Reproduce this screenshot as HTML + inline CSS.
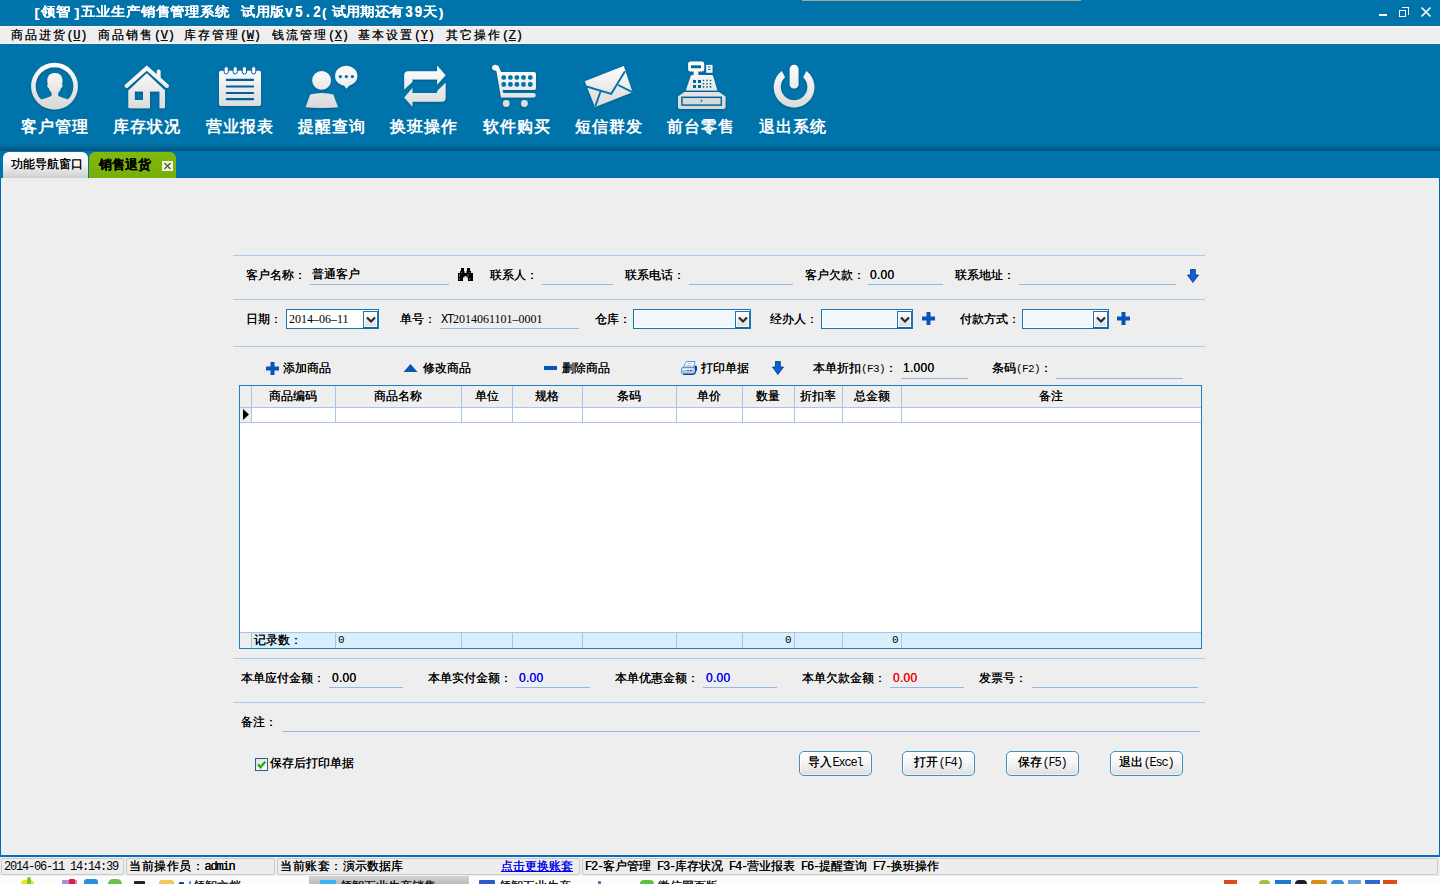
<!DOCTYPE html>
<html><head><meta charset="utf-8">
<style>
*{margin:0;padding:0;box-sizing:border-box}
html,body{width:1440px;height:884px;overflow:hidden;background:#eeeeee;font-family:"Liberation Sans",sans-serif;font-size:12px;color:#000;text-shadow:0 0 0.3px currentColor}
.a{position:absolute;white-space:nowrap}
.t{line-height:12px;height:12px}
.hl{position:absolute;height:1px;background:#a9c9ef}
.ul{position:absolute;height:1px;background:#91b8e8}
.lbl{position:absolute;color:#fff;text-shadow:none;font-size:16px;font-weight:bold;line-height:16px;top:118.5px;letter-spacing:1px;text-indent:1px;text-align:center;width:92px}
.combo{position:absolute;height:20px;border:1px solid #1873b0;background:#f2f9fe}
.combo i{position:absolute;right:1px;top:1px;width:15px;height:16px;background:linear-gradient(#f4f4f4,#dcdcdc);border:1px solid #8a8a8a}
.btn{position:absolute;height:25px;width:73px;border:1px solid #3c92c6;border-radius:5px;background:linear-gradient(#ffffff,#f6f6f6 45%,#dedede);text-align:center;line-height:20px;font-size:12px;box-shadow:inset 0 0 0 1px rgba(255,255,255,.6)}
.gl{position:absolute;background:#a9c4ec;width:1px}
.m{font-family:"Liberation Mono",monospace;font-size:11px;letter-spacing:-0.6px;text-shadow:none}
.m2{font-family:"Liberation Mono",monospace;font-size:12px;letter-spacing:-1.2px;text-shadow:none}
</style></head><body>

<div class="a" style="left:0;top:0;width:1440px;height:26px;background:#0074aa"></div>
<div class="a" style="left:802px;top:0;width:279px;height:1px;background:#a9a797"></div>
<div class="a" style="left:32.0px;width:10px;text-align:center;top:4px;color:#fff;font-weight:bold;font-size:13px;line-height:14px;font-family:Liberation Mono,monospace;transform:translateY(3px) scaleY(1.0);transform-origin:50% 100%">[</div>
<div class="a" style="left:40.5px;top:5px;color:#fff;font-weight:bold;font-size:14px;line-height:13px;height:13px;transform:scaleY(0.9);transform-origin:0 50%">领</div>
<div class="a" style="left:56.0px;top:5px;color:#fff;font-weight:bold;font-size:14px;line-height:13px;height:13px;transform:scaleY(0.9);transform-origin:0 50%">智</div>
<div class="a" style="left:72.0px;width:10px;text-align:center;top:4px;color:#fff;font-weight:bold;font-size:13px;line-height:14px;font-family:Liberation Mono,monospace;transform:translateY(3px) scaleY(1.0);transform-origin:50% 100%">]</div>
<div class="a" style="left:81.0px;top:5px;color:#fff;font-weight:bold;font-size:14px;line-height:13px;height:13px;transform:scaleY(0.9);transform-origin:0 50%">五</div>
<div class="a" style="left:95.9px;top:5px;color:#fff;font-weight:bold;font-size:14px;line-height:13px;height:13px;transform:scaleY(0.9);transform-origin:0 50%">业</div>
<div class="a" style="left:110.8px;top:5px;color:#fff;font-weight:bold;font-size:14px;line-height:13px;height:13px;transform:scaleY(0.9);transform-origin:0 50%">生</div>
<div class="a" style="left:125.7px;top:5px;color:#fff;font-weight:bold;font-size:14px;line-height:13px;height:13px;transform:scaleY(0.9);transform-origin:0 50%">产</div>
<div class="a" style="left:140.6px;top:5px;color:#fff;font-weight:bold;font-size:14px;line-height:13px;height:13px;transform:scaleY(0.9);transform-origin:0 50%">销</div>
<div class="a" style="left:155.5px;top:5px;color:#fff;font-weight:bold;font-size:14px;line-height:13px;height:13px;transform:scaleY(0.9);transform-origin:0 50%">售</div>
<div class="a" style="left:170.4px;top:5px;color:#fff;font-weight:bold;font-size:14px;line-height:13px;height:13px;transform:scaleY(0.9);transform-origin:0 50%">管</div>
<div class="a" style="left:185.3px;top:5px;color:#fff;font-weight:bold;font-size:14px;line-height:13px;height:13px;transform:scaleY(0.9);transform-origin:0 50%">理</div>
<div class="a" style="left:200.2px;top:5px;color:#fff;font-weight:bold;font-size:14px;line-height:13px;height:13px;transform:scaleY(0.9);transform-origin:0 50%">系</div>
<div class="a" style="left:215.1px;top:5px;color:#fff;font-weight:bold;font-size:14px;line-height:13px;height:13px;transform:scaleY(0.9);transform-origin:0 50%">统</div>
<div class="a" style="left:241.3px;top:5px;color:#fff;font-weight:bold;font-size:14px;line-height:13px;height:13px;transform:scaleY(0.9);transform-origin:0 50%">试</div>
<div class="a" style="left:255.5px;top:5px;color:#fff;font-weight:bold;font-size:14px;line-height:13px;height:13px;transform:scaleY(0.9);transform-origin:0 50%">用</div>
<div class="a" style="left:270.0px;top:5px;color:#fff;font-weight:bold;font-size:14px;line-height:13px;height:13px;transform:scaleY(0.9);transform-origin:0 50%">版</div>
<div class="a" style="left:284.0px;width:10px;text-align:center;top:4px;color:#fff;font-weight:bold;font-size:13px;line-height:14px;font-family:Liberation Mono,monospace;transform:translateY(4px) scaleY(1.3);transform-origin:50% 100%">v</div>
<div class="a" style="left:293.8px;width:10px;text-align:center;top:4px;color:#fff;font-weight:bold;font-size:13px;line-height:14px;font-family:Liberation Mono,monospace;transform:translateY(4px) scaleY(1.3);transform-origin:50% 100%">5</div>
<div class="a" style="left:302.8px;width:10px;text-align:center;top:4px;color:#fff;font-weight:bold;font-size:13px;line-height:14px;font-family:Liberation Mono,monospace;transform:translateY(4px) scaleY(1.3);transform-origin:50% 100%">.</div>
<div class="a" style="left:312.0px;width:10px;text-align:center;top:4px;color:#fff;font-weight:bold;font-size:13px;line-height:14px;font-family:Liberation Mono,monospace;transform:translateY(4px) scaleY(1.3);transform-origin:50% 100%">2</div>
<div class="a" style="left:319.4px;width:10px;text-align:center;top:4px;color:#fff;font-weight:bold;font-size:13px;line-height:14px;font-family:Liberation Mono,monospace;transform:translateY(3px) scaleY(1.0);transform-origin:50% 100%">(</div>
<div class="a" style="left:331.5px;top:5px;color:#fff;font-weight:bold;font-size:14px;line-height:13px;height:13px;transform:scaleY(0.9);transform-origin:0 50%">试</div>
<div class="a" style="left:345.8px;top:5px;color:#fff;font-weight:bold;font-size:14px;line-height:13px;height:13px;transform:scaleY(0.9);transform-origin:0 50%">用</div>
<div class="a" style="left:360.3px;top:5px;color:#fff;font-weight:bold;font-size:14px;line-height:13px;height:13px;transform:scaleY(0.9);transform-origin:0 50%">期</div>
<div class="a" style="left:374.5px;top:5px;color:#fff;font-weight:bold;font-size:14px;line-height:13px;height:13px;transform:scaleY(0.9);transform-origin:0 50%">还</div>
<div class="a" style="left:388.7px;top:5px;color:#fff;font-weight:bold;font-size:14px;line-height:13px;height:13px;transform:scaleY(0.9);transform-origin:0 50%">有</div>
<div class="a" style="left:404.0px;width:10px;text-align:center;top:4px;color:#fff;font-weight:bold;font-size:13px;line-height:14px;font-family:Liberation Mono,monospace;transform:translateY(4px) scaleY(1.3);transform-origin:50% 100%">3</div>
<div class="a" style="left:413.5px;width:10px;text-align:center;top:4px;color:#fff;font-weight:bold;font-size:13px;line-height:14px;font-family:Liberation Mono,monospace;transform:translateY(4px) scaleY(1.3);transform-origin:50% 100%">9</div>
<div class="a" style="left:423.4px;top:5px;color:#fff;font-weight:bold;font-size:14px;line-height:13px;height:13px;transform:scaleY(0.9);transform-origin:0 50%">天</div>
<div class="a" style="left:436.0px;width:10px;text-align:center;top:4px;color:#fff;font-weight:bold;font-size:13px;line-height:14px;font-family:Liberation Mono,monospace;transform:translateY(3px) scaleY(1.0);transform-origin:50% 100%">)</div>
<div class="a" style="left:1379px;top:14px;width:8px;height:2px;background:#fff"></div>
<div class="a" style="left:1402px;top:7px;width:7px;height:8px;border-top:1px solid #fff;border-right:1px solid #fff"></div>
<div class="a" style="left:1399px;top:10px;width:7px;height:7px;border:1px solid #fff"></div>
<svg class="a" style="left:1420px;top:6px" width="12" height="12"><path d="M1.5 1.5L10.5 10.5M10.5 1.5L1.5 10.5" stroke="#fff" stroke-width="1.6"/></svg>
<div class="a" style="left:0;top:26px;width:1440px;height:18px;background:#eeeeee"></div>
<div class="a" style="left:0;top:26px;width:1440px;height:1px;background:#fbf6f2"></div>
<div class="a" style="left:0;top:43px;width:1440px;height:1px;background:#fbf6f2"></div>
<div class="a t" style="left:10.5px;top:29px;color:#111"><span style="letter-spacing:2px">商品进货</span><span style="font-family:Liberation Mono,monospace;letter-spacing:-0.4px">(<u>U</u>)</span></div>
<div class="a t" style="left:98px;top:29px;color:#111"><span style="letter-spacing:2px">商品销售</span><span style="font-family:Liberation Mono,monospace;letter-spacing:-0.4px">(<u>V</u>)</span></div>
<div class="a t" style="left:184px;top:29px;color:#111"><span style="letter-spacing:2px">库存管理</span><span style="font-family:Liberation Mono,monospace;letter-spacing:-0.4px">(<u>W</u>)</span></div>
<div class="a t" style="left:272px;top:29px;color:#111"><span style="letter-spacing:2px">钱流管理</span><span style="font-family:Liberation Mono,monospace;letter-spacing:-0.4px">(<u>X</u>)</span></div>
<div class="a t" style="left:358px;top:29px;color:#111"><span style="letter-spacing:2px">基本设置</span><span style="font-family:Liberation Mono,monospace;letter-spacing:-0.4px">(<u>Y</u>)</span></div>
<div class="a t" style="left:446px;top:29px;color:#111"><span style="letter-spacing:2px">其它操作</span><span style="font-family:Liberation Mono,monospace;letter-spacing:-0.4px">(<u>Z</u>)</span></div>
<div class="a" style="left:0;top:44px;width:1440px;height:134px;background:#0074aa"></div>
<div class="a" style="left:0;top:144px;width:1440px;height:7px;background:linear-gradient(#0074aa,#03507a)"></div>
<div class="lbl" style="left:8.5px">客户管理</div>
<div class="lbl" style="left:100.8px">库存状况</div>
<div class="lbl" style="left:193.1px">营业报表</div>
<div class="lbl" style="left:285.4px">提醒查询</div>
<div class="lbl" style="left:377.7px">换班操作</div>
<div class="lbl" style="left:470.0px">软件购买</div>
<div class="lbl" style="left:562.3px">短信群发</div>
<div class="lbl" style="left:654.6px">前台零售</div>
<div class="lbl" style="left:746.9px">退出系统</div>
<svg class="a" style="left:28px;top:58px" width="54" height="56" viewBox="0 0 54 56"><defs><linearGradient id="g" gradientUnits="userSpaceOnUse" x1="0" y1="4" x2="0" y2="48"><stop offset="0" stop-color="#ffffff"/><stop offset="1" stop-color="#d9d9d9"/></linearGradient><filter id="sh" x="-20%" y="-20%" width="140%" height="140%"><feDropShadow dx="0" dy="1" stdDeviation="0.8" flood-color="#003a5a" flood-opacity="0.5"/></filter></defs><g fill="url(#g)" filter="url(#sh)"><path fill-rule="evenodd" d="M3.1 28.2a23.4 23.4 0 1 0 46.8 0a23.4 23.4 0 1 0 -46.8 0z M7.6 28.2a18.9 18.9 0 1 0 37.8 0a18.9 18.9 0 1 0 -37.8 0z"/><clipPath id="pc"><circle cx="26.5" cy="28.2" r="19.6"/></clipPath><g clip-path="url(#pc)"><path d="M26.5 14.9c-4.4 0-7.2 3-7.2 7.6 0 1.6.2 2.9.6 4.1-.8.2-.8 1.3-.4 2.2.3.7.7 1 1.1 1 .7 2.2 1.8 4 3 5v3.3c-3 1.3-8.5 3.1-12.8 4.3L10 52H43L43 42.4c-4.3-1.2-9.8-3-12.8-4.3v-3.3c1.2-1 2.3-2.8 3-5 .4 0 .8-.3 1.1-1 .4-.9.4-2-.4-2.2.4-1.2.6-2.5.6-4.1 0-4.6-2.8-7.6-7.2-7.6z"/></g></g></svg>
<svg class="a" style="left:120px;top:62px" width="54" height="50" viewBox="0 0 54 50"><defs><linearGradient id="g" gradientUnits="userSpaceOnUse" x1="0" y1="4" x2="0" y2="48"><stop offset="0" stop-color="#ffffff"/><stop offset="1" stop-color="#d9d9d9"/></linearGradient><filter id="sh" x="-20%" y="-20%" width="140%" height="140%"><feDropShadow dx="0" dy="1" stdDeviation="0.8" flood-color="#003a5a" flood-opacity="0.5"/></filter></defs><g fill="url(#g)" filter="url(#sh)"><path d="M6.6 24 L26.8 6 L47 24" stroke="url(#g)" stroke-width="3.9" stroke-linecap="round" fill="none"/><path d="M36.8 9.5 a1.9 1.9 0 0 1 3.8 0 V18 L36.8 14.6 Z"/><path fill-rule="evenodd" d="M8.3 28.6 L26.8 11.3 L45 28.6 V45 a1.2 1.2 0 0 1 -1.2 1.2 H9.5 a1.2 1.2 0 0 1 -1.2 -1.2 Z M14.8 29.6 H23 V38 H14.8 Z M30 29.6 H39.5 V46.3 H30 Z"/></g></svg>
<svg class="a" style="left:215px;top:62px" width="50" height="48" viewBox="0 0 50 48"><defs><linearGradient id="g4" gradientUnits="userSpaceOnUse" x1="0" y1="4" x2="0" y2="48"><stop offset="0" stop-color="#ffffff"/><stop offset="1" stop-color="#d9d9d9"/></linearGradient><filter id="sh4" x="-20%" y="-20%" width="140%" height="140%"><feDropShadow dx="0" dy="1" stdDeviation="0.8" flood-color="#003a5a" flood-opacity="0.5"/></filter></defs><g fill="url(#g4)" filter="url(#sh4)"><path fill-rule="evenodd" d="M4 10.7 a2 2 0 0 1 2-2 H44 a2 2 0 0 1 2 2 V42 a2 2 0 0 1-2 2 H6 a2 2 0 0 1-2-2 Z"/></g><rect x="10.7" y="16.8" width="28.5" height="2.2" rx="1.1" fill="#00619a"/><rect x="10.7" y="23.4" width="28.5" height="2.2" rx="1.1" fill="#00619a"/><rect x="10.7" y="29.9" width="28.5" height="2.2" rx="1.1" fill="#00619a"/><rect x="10.7" y="36.1" width="28.5" height="2.2" rx="1.1" fill="#00619a"/><rect x="9.1" y="4.6" width="4.2" height="7.4" rx="2.1" fill="#fff" stroke="#00619a" stroke-width="1"/><rect x="18.1" y="4.6" width="4.2" height="7.4" rx="2.1" fill="#fff" stroke="#00619a" stroke-width="1"/><rect x="27.3" y="4.6" width="4.2" height="7.4" rx="2.1" fill="#fff" stroke="#00619a" stroke-width="1"/><rect x="36.6" y="4.6" width="4.2" height="7.4" rx="2.1" fill="#fff" stroke="#00619a" stroke-width="1"/></svg>
<svg class="a" style="left:302px;top:60px" width="60" height="52" viewBox="0 0 60 52"><defs><linearGradient id="g6" gradientUnits="userSpaceOnUse" x1="0" y1="4" x2="0" y2="48"><stop offset="0" stop-color="#ffffff"/><stop offset="1" stop-color="#d9d9d9"/></linearGradient><filter id="sh6" x="-20%" y="-20%" width="140%" height="140%"><feDropShadow dx="0" dy="1" stdDeviation="0.8" flood-color="#003a5a" flood-opacity="0.5"/></filter></defs><g fill="url(#g6)" filter="url(#sh6)"><circle cx="19.6" cy="20.4" r="9.4"/><path d="M8.2 34.6 Q20 31.2 31.3 34.6 L36 47.2 Q20 48.6 3.6 47.2 Z"/><ellipse cx="44.2" cy="15.9" rx="11.1" ry="10.1"/><path d="M41.2 24 L44.3 28.7 L50.8 21.8 Z"/></g><circle cx="38.3" cy="16.6" r="1.6" fill="#0074aa"/><circle cx="44.3" cy="16.6" r="1.6" fill="#0074aa"/><circle cx="50.4" cy="16.6" r="1.6" fill="#0074aa"/></svg>
<svg class="a" style="left:400px;top:62px" width="50" height="50" viewBox="0 0 50 50"><defs><linearGradient id="g" gradientUnits="userSpaceOnUse" x1="0" y1="4" x2="0" y2="48"><stop offset="0" stop-color="#ffffff"/><stop offset="1" stop-color="#d9d9d9"/></linearGradient><filter id="sh" x="-20%" y="-20%" width="140%" height="140%"><feDropShadow dx="0" dy="1" stdDeviation="0.8" flood-color="#003a5a" flood-opacity="0.5"/></filter></defs><g fill="url(#g)" filter="url(#sh)"><path d="M4.2 27.6 V13.2 a4 4 0 0 1 4-4 H37.1 V3.6 L45.6 13.3 L37.1 22.8 V17.4 H12.4 V20.1 Z"/><path d="M45.6 20.8 V35.8 a4 4 0 0 1-4 4 H12.4 V44.8 L4.2 35.4 L12.4 26.1 V31 H37.1 V28.9 Z"/></g></svg>
<svg class="a" style="left:488px;top:61px" width="52" height="52" viewBox="0 0 52 52"><defs><linearGradient id="g3" gradientUnits="userSpaceOnUse" x1="0" y1="4" x2="0" y2="48"><stop offset="0" stop-color="#ffffff"/><stop offset="1" stop-color="#d9d9d9"/></linearGradient><filter id="sh3" x="-20%" y="-20%" width="140%" height="140%"><feDropShadow dx="0" dy="1" stdDeviation="0.8" flood-color="#003a5a" flood-opacity="0.5"/></filter></defs><g fill="url(#g3)" filter="url(#sh3)"><path d="M4 7 a3 3 0 0 1 4-3 l2.5 1 L13 11 H46 a2 2 0 0 1 2 2 V27 a2 2 0 0 1-2 2 H14.5 l.8 3 H45.5 a2 2 0 0 1 0 4.5 H13 L8.5 10 l-1.8-.6 A3 3 0 0 1 4 7 Z"/><circle cx="18.2" cy="42.5" r="3.4"/><circle cx="36.4" cy="42.5" r="3.4"/></g><rect x="13.45" y="14.20" width="4.6" height="4.6" rx="1.8" fill="#0074aa"/><rect x="20.10" y="14.20" width="4.6" height="4.6" rx="1.8" fill="#0074aa"/><rect x="26.60" y="14.20" width="4.6" height="4.6" rx="1.8" fill="#0074aa"/><rect x="33.20" y="14.20" width="4.6" height="4.6" rx="1.8" fill="#0074aa"/><rect x="39.95" y="14.20" width="4.6" height="4.6" rx="1.8" fill="#0074aa"/><rect x="13.45" y="21.10" width="4.6" height="4.6" rx="1.8" fill="#0074aa"/><rect x="20.10" y="21.10" width="4.6" height="4.6" rx="1.8" fill="#0074aa"/><rect x="26.60" y="21.10" width="4.6" height="4.6" rx="1.8" fill="#0074aa"/><rect x="33.20" y="21.10" width="4.6" height="4.6" rx="1.8" fill="#0074aa"/><rect x="39.95" y="21.10" width="4.6" height="4.6" rx="1.8" fill="#0074aa"/></svg>
<svg class="a" style="left:580px;top:60px" width="58" height="52" viewBox="0 0 58 52"><defs><linearGradient id="g2" gradientUnits="userSpaceOnUse" x1="0" y1="4" x2="0" y2="48"><stop offset="0" stop-color="#ffffff"/><stop offset="1" stop-color="#d9d9d9"/></linearGradient><filter id="sh2" x="-20%" y="-20%" width="140%" height="140%"><feDropShadow dx="0" dy="1" stdDeviation="0.8" flood-color="#003a5a" flood-opacity="0.5"/></filter></defs><g filter="url(#sh2)"><path fill="url(#g2)" d="M4.8 21.3 L43.8 6 L52.5 32.3 L15 46.9 Z"/></g><path d="M6.5 26.5 L31.2 33.8 L45 11.2 M15.3 46.2 L20.6 31.2 M52.3 32.2 L38.1 25" stroke="#0074aa" stroke-width="1.9" fill="none"/></svg>
<svg class="a" style="left:674px;top:58px" width="56" height="56" viewBox="0 0 56 56"><defs><linearGradient id="g5" gradientUnits="userSpaceOnUse" x1="0" y1="4" x2="0" y2="48"><stop offset="0" stop-color="#ffffff"/><stop offset="1" stop-color="#d9d9d9"/></linearGradient><filter id="sh5" x="-20%" y="-20%" width="140%" height="140%"><feDropShadow dx="0" dy="1" stdDeviation="0.8" flood-color="#003a5a" flood-opacity="0.5"/></filter></defs><g fill="url(#g5)" filter="url(#sh5)"><path fill-rule="evenodd" d="M14.1 6.1 a2.5 2.5 0 0 1 2.5-2.5 H27.7 a2.5 2.5 0 0 1 2.5 2.5 V11 a2.5 2.5 0 0 1-2.5 2.5 H24.3 V17.5 H19.7 V13.5 H16.6 A2.5 2.5 0 0 1 14.1 11 Z M17 7.2 V10.2 H27 V7.2 Z"/><path d="M32.2 6.9 H38.5 V14.8 H32.2 Z"/><path fill-rule="evenodd" d="M18.2 17.1 H37.6 a1.5 1.5 0 0 1 1.5 1.2 L43.4 32.5 H11.8 L16.7 18.3 a1.5 1.5 0 0 1 1.5-1.2 ZM19.0 22.0 h3 v3 h-3 ZM24.0 22.0 h3 v3 h-3 ZM19.0 27.0 h3 v3 h-3 ZM24.0 27.0 h3 v3 h-3 ZM28.7 21.7 h1.6 v1.6 h-1.6 ZM32.2 21.7 h1.6 v1.6 h-1.6 ZM35.7 21.7 h1.6 v1.6 h-1.6 ZM28.7 24.9 h1.6 v1.6 h-1.6 ZM32.2 24.9 h1.6 v1.6 h-1.6 ZM35.7 24.9 h1.6 v1.6 h-1.6 ZM28.7 28.1 h1.6 v1.6 h-1.6 ZM32.2 28.1 h1.6 v1.6 h-1.6 ZM35.7 28.1 h1.6 v1.6 h-1.6 Z"/><path d="M10.4 33.9 H45 L51.5 38.6 V49 a2 2 0 0 1 -2 2 H6 a2 2 0 0 1 -2-2 V38.6 Z"/></g><rect x="7.9" y="39.3" width="39.4" height="7.8" fill="#dadada" stroke="#0068a0" stroke-width="1.5"/><path d="M26.8 41.2 L28.6 42.8 L26.8 44.4 Z" fill="#0068a0"/><path d="M34 9 h2.5 M34 11.5 h2.5" stroke="#0068a0" stroke-width="1"/></svg>
<svg class="a" style="left:770px;top:61px" width="50" height="52" viewBox="0 0 50 52"><defs><linearGradient id="g" gradientUnits="userSpaceOnUse" x1="0" y1="4" x2="0" y2="48"><stop offset="0" stop-color="#ffffff"/><stop offset="1" stop-color="#d9d9d9"/></linearGradient><filter id="sh" x="-20%" y="-20%" width="140%" height="140%"><feDropShadow dx="0" dy="1" stdDeviation="0.8" flood-color="#003a5a" flood-opacity="0.5"/></filter></defs><g fill="url(#g)" filter="url(#sh)"><path d="M11.8 10 L15 16.2 A13.3 13.3 0 1 0 33.2 16.2 L36.4 10 A20.3 20.3 0 1 1 11.8 10 Z"/><rect x="19.7" y="3.8" width="8.8" height="23.8" rx="4.4"/></g></svg>
<div class="a" style="left:3px;top:152px;width:85px;height:26px;border-radius:6px 6px 0 0;background:linear-gradient(#ffffff,#f4f4f4 45%,#cfcfcf)"></div>
<div class="a t" style="left:11px;top:158px;color:#000">功能导航窗口</div>
<div class="a" style="left:89px;top:152px;width:87px;height:26px;border-radius:6px 6px 0 0;background:linear-gradient(#80ba0a,#78ae0a)"></div>
<div class="a" style="left:99px;top:158px;font-weight:bold;font-size:13px;line-height:13px">销售退货</div>
<div class="a" style="left:162px;top:161px;width:11px;height:10px;background:#f3f3ea"></div>
<svg class="a" style="left:162px;top:161px" width="11" height="10"><path d="M2.5 2 L8.5 8 M8.5 2 L2.5 8" stroke="#4a6a1a" stroke-width="1.4"/></svg>
<div class="a" style="left:0;top:178px;width:1440px;height:679px;background:#eeeeee"></div>
<div class="a" style="left:177px;top:177px;width:1263px;height:1px;background:#0068b4"></div>
<div class="a" style="left:0;top:178px;width:1px;height:679px;background:#0068b6"></div>
<div class="a" style="left:1439px;top:178px;width:1px;height:679px;background:#0068b6"></div>
<div class="a" style="left:0;top:855px;width:1440px;height:2px;background:#0a6cbc"></div>
<div class="hl" style="left:233px;top:255px;width:972px"></div>
<div class="hl" style="left:233px;top:299px;width:972px"></div>
<div class="hl" style="left:233px;top:346px;width:972px"></div>
<div class="hl" style="left:233px;top:658px;width:972px"></div>
<div class="hl" style="left:233px;top:702px;width:972px"></div>
<div class="a t" style="left:246px;top:269px;">客户名称：</div>
<div class="a t" style="left:312px;top:268px;">普通客户</div>
<div class="ul" style="left:310px;top:284px;width:139px"></div>
<svg class="a" style="left:458px;top:268px" width="15" height="13" viewBox="0 0 15 13"><path fill="#000" d="M3 0h3v3h0.5v6.5H5V13H0V5h2V3h1z M12 0h-3v3h-0.5v6.5H10V13h5V5h-2V3h-1z M6.5 5h2v3h-2z"/><path fill="#666" d="M1 6h1v3H1z M3 4h1v1H3z M1 10h1v2H1z M9.5 6h1v3h-1z M11 4h1v1h-1z M11.5 10h1v2h-1z"/></svg>
<div class="a t" style="left:490px;top:269px;">联系人：</div>
<div class="ul" style="left:542px;top:284px;width:71px"></div>
<div class="a t" style="left:625px;top:269px;">联系电话：</div>
<div class="ul" style="left:689px;top:284px;width:104px"></div>
<div class="a t" style="left:805px;top:269px;">客户欠款：</div>
<div class="a t" style="left:870px;top:269px;letter-spacing:0.3px">0.00</div>
<div class="ul" style="left:868px;top:284px;width:75px"></div>
<div class="a t" style="left:955px;top:269px;">联系地址：</div>
<div class="ul" style="left:1019px;top:284px;width:157px"></div>
<svg class="a" style="left:1187px;top:269px" width="12" height="15" viewBox="0 0 12 15"><path fill="#0a62d2" stroke="#0a3c9c" stroke-width="0.9" d="M3.5 0.5h4.8v5.5h3.2L5.9 13.5 0.5 6h3z"/></svg>
<div class="a t" style="left:246px;top:313px;">日期：</div>
<div class="a" style="left:286px;top:309px;width:93px;height:20px;border:1px solid #1677b3;background:#fff"></div>
<div class="a" style="left:288px;top:311px;width:74px;height:16px;background:#ffffff"></div>
<div class="a" style="left:363px;top:311px;width:15px;height:18px;border:1px solid #1677b3;border-bottom:2px solid #0f6aa6;background:#fff"></div>
<div class="a" style="left:365px;top:313px;width:11px;height:13px;background:linear-gradient(#fdfdfd,#dedede)"></div>
<svg class="a" style="left:366px;top:316px" width="10" height="8"><path d="M1 1.5L5 5.5L9 1.5" stroke="#2a2a2a" stroke-width="2.2" fill="none"/></svg>
<div class="a t" style="left:289px;top:313px;font-family:Liberation Serif,serif;font-size:12px;text-shadow:none;letter-spacing:0">2014–06–11</div>
<div class="a t" style="left:400px;top:313px;">单号：</div>
<div class="a t" style="left:441px;top:313px;font-family:Liberation Serif,serif;font-size:12px;text-shadow:none;letter-spacing:0"><span style="font-family:Liberation Mono,monospace;font-size:12px;letter-spacing:-1.2px">XT</span>2014061101–0001</div>
<div class="ul" style="left:440px;top:328px;width:139px"></div>
<div class="a t" style="left:595px;top:313px;">仓库：</div>
<div class="a" style="left:633px;top:309px;width:118px;height:20px;border:1px solid #1677b3;background:#fff"></div>
<div class="a" style="left:635px;top:311px;width:99px;height:16px;background:#f0f8fe"></div>
<div class="a" style="left:735px;top:311px;width:15px;height:18px;border:1px solid #1677b3;border-bottom:2px solid #0f6aa6;background:#fff"></div>
<div class="a" style="left:737px;top:313px;width:11px;height:13px;background:linear-gradient(#fdfdfd,#dedede)"></div>
<svg class="a" style="left:738px;top:316px" width="10" height="8"><path d="M1 1.5L5 5.5L9 1.5" stroke="#2a2a2a" stroke-width="2.2" fill="none"/></svg>
<div class="a t" style="left:770px;top:313px;">经办人：</div>
<div class="a" style="left:821px;top:309px;width:92px;height:20px;border:1px solid #1677b3;background:#fff"></div>
<div class="a" style="left:823px;top:311px;width:73px;height:16px;background:#f0f8fe"></div>
<div class="a" style="left:897px;top:311px;width:15px;height:18px;border:1px solid #1677b3;border-bottom:2px solid #0f6aa6;background:#fff"></div>
<div class="a" style="left:899px;top:313px;width:11px;height:13px;background:linear-gradient(#fdfdfd,#dedede)"></div>
<svg class="a" style="left:900px;top:316px" width="10" height="8"><path d="M1 1.5L5 5.5L9 1.5" stroke="#2a2a2a" stroke-width="2.2" fill="none"/></svg>
<div class="a t" style="left:960px;top:313px;">付款方式：</div>
<div class="a" style="left:1022px;top:309px;width:87px;height:20px;border:1px solid #1677b3;background:#fff"></div>
<div class="a" style="left:1024px;top:311px;width:68px;height:16px;background:#f0f8fe"></div>
<div class="a" style="left:1093px;top:311px;width:15px;height:18px;border:1px solid #1677b3;border-bottom:2px solid #0f6aa6;background:#fff"></div>
<div class="a" style="left:1095px;top:313px;width:11px;height:13px;background:linear-gradient(#fdfdfd,#dedede)"></div>
<svg class="a" style="left:1096px;top:316px" width="10" height="8"><path d="M1 1.5L5 5.5L9 1.5" stroke="#2a2a2a" stroke-width="2.2" fill="none"/></svg>
<svg class="a" style="left:922px;top:312px" width="13" height="13" viewBox="0 0 13 13"><path fill="#0a54b8" d="M4.5 0h4v4.5H13v4H8.5V13h-4V8.5H0v-4h4.5z"/></svg>
<svg class="a" style="left:1117px;top:312px" width="13" height="13" viewBox="0 0 13 13"><path fill="#0a54b8" d="M4.5 0h4v4.5H13v4H8.5V13h-4V8.5H0v-4h4.5z"/></svg>
<svg class="a" style="left:266px;top:362px" width="13" height="13" viewBox="0 0 13 13"><path fill="#0a54b8" d="M4.5 0h4v4.5H13v4H8.5V13h-4V8.5H0v-4h4.5z"/></svg>
<div class="a t" style="left:283px;top:362px;">添加商品</div>
<svg class="a" style="left:403px;top:363px" width="15" height="10"><path fill="#0a54b8" d="M7.5 1L14.5 9H0.5z"/></svg>
<div class="a t" style="left:423px;top:362px;">修改商品</div>
<div class="a" style="left:544px;top:366px;width:13px;height:4px;background:#0a54b8"></div>
<div class="a t" style="left:562px;top:362px;">删除商品</div>
<svg class="a" style="left:676px;top:356px" width="26" height="22" viewBox="0 0 26 22"><path d="M10.5 5.5H19L17.5 11H7.5Z" fill="#fff" stroke="#5a96d2"/><path d="M11.5 7.5H15.8M10.5 9.5H14.8" stroke="#c4c4c4"/><rect x="5.5" y="11.5" width="14" height="6" rx="1" fill="#9fcaf6" stroke="#5a96d2"/><rect x="6.5" y="12.6" width="10.5" height="1.3" fill="#fff"/><path d="M18.6 9.4 L20.2 9.6 L21 11 L21 13.8 L19.5 17.2 L17.8 19 L7.2 19 L7.2 17.9 L17.5 17.9 L19.2 15.5 Z" fill="#0a36a4"/><rect x="11" y="13.9" width="2" height="1.1" fill="#10b010"/><rect x="14" y="13.9" width="2" height="1.1" fill="#e01010"/></svg>
<div class="a t" style="left:701px;top:362px;">打印单据</div>
<svg class="a" style="left:772px;top:361px" width="12" height="15" viewBox="0 0 12 15"><path fill="#0a62d2" stroke="#0a3c9c" stroke-width="0.9" d="M3.5 0.5h4.8v5.5h3.2L5.9 13.5 0.5 6h3z"/></svg>
<div class="a t" style="left:813px;top:362px;">本单折扣<span style="font-family:Liberation Mono,monospace;font-size:11px;letter-spacing:-0.6px;text-shadow:none">(F3)</span>：</div>
<div class="a t" style="left:903px;top:362px;letter-spacing:0.3px">1.000</div>
<div class="ul" style="left:901px;top:378px;width:67px"></div>
<div class="a t" style="left:992px;top:362px;">条码<span style="font-family:Liberation Mono,monospace;font-size:11px;letter-spacing:-0.6px;text-shadow:none">(F2)</span>：</div>
<div class="ul" style="left:1056px;top:378px;width:127px"></div>
<div class="a" style="left:239px;top:385px;width:963px;height:264px;background:#fff;border:1px solid #1d7fbe"></div>
<div class="a" style="left:240px;top:386px;width:961px;height:21px;background:#efefef"></div>
<div class="a" style="left:240px;top:408px;width:11px;height:14px;background:#efefef"></div>
<div class="a" style="left:240px;top:407px;width:961px;height:1px;background:#a9c4ec"></div>
<div class="a" style="left:240px;top:422px;width:961px;height:1px;background:#a9c4ec"></div>
<div class="a" style="left:240px;top:632px;width:961px;height:16px;background:#d8f0fb;border-top:1px solid #a9c4ec"></div>
<div class="a" style="left:240px;top:633px;width:12px;height:15px;background:#eeeeee"></div>
<div class="gl" style="left:251px;top:386px;height:37px"></div>
<div class="gl" style="left:251px;top:633px;height:15px"></div>
<div class="gl" style="left:335px;top:386px;height:37px"></div>
<div class="gl" style="left:335px;top:633px;height:15px"></div>
<div class="gl" style="left:461px;top:386px;height:37px"></div>
<div class="gl" style="left:461px;top:633px;height:15px"></div>
<div class="gl" style="left:512px;top:386px;height:37px"></div>
<div class="gl" style="left:512px;top:633px;height:15px"></div>
<div class="gl" style="left:582px;top:386px;height:37px"></div>
<div class="gl" style="left:582px;top:633px;height:15px"></div>
<div class="gl" style="left:676px;top:386px;height:37px"></div>
<div class="gl" style="left:676px;top:633px;height:15px"></div>
<div class="gl" style="left:742px;top:386px;height:37px"></div>
<div class="gl" style="left:742px;top:633px;height:15px"></div>
<div class="gl" style="left:794px;top:386px;height:37px"></div>
<div class="gl" style="left:794px;top:633px;height:15px"></div>
<div class="gl" style="left:842px;top:386px;height:37px"></div>
<div class="gl" style="left:842px;top:633px;height:15px"></div>
<div class="gl" style="left:901px;top:386px;height:37px"></div>
<div class="gl" style="left:901px;top:633px;height:15px"></div>
<div class="a t" style="left:251px;top:390px;width:84px;text-align:center">商品编码</div>
<div class="a t" style="left:335px;top:390px;width:126px;text-align:center">商品名称</div>
<div class="a t" style="left:461px;top:390px;width:51px;text-align:center">单位</div>
<div class="a t" style="left:512px;top:390px;width:70px;text-align:center">规格</div>
<div class="a t" style="left:582px;top:390px;width:94px;text-align:center">条码</div>
<div class="a t" style="left:676px;top:390px;width:66px;text-align:center">单价</div>
<div class="a t" style="left:742px;top:390px;width:52px;text-align:center">数量</div>
<div class="a t" style="left:794px;top:390px;width:48px;text-align:center">折扣率</div>
<div class="a t" style="left:842px;top:390px;width:59px;text-align:center">总金额</div>
<div class="a t" style="left:901px;top:390px;width:300px;text-align:center">备注</div>
<svg class="a" style="left:243px;top:409px" width="6" height="11"><path d="M0 0L6 5.5L0 11z" fill="#000"/></svg>
<div class="a t" style="left:254px;top:634px;">记录数：</div>
<div class="a t" style="left:338px;top:634px;font-family:Liberation Mono,monospace;font-size:11px;text-shadow:none">0</div>
<div class="a t" style="left:785px;top:634px;font-family:Liberation Mono,monospace;font-size:11px;text-shadow:none">0</div>
<div class="a t" style="left:892px;top:634px;font-family:Liberation Mono,monospace;font-size:11px;text-shadow:none">0</div>
<div class="a t" style="left:241px;top:672px;">本单应付金额：</div>
<div class="a t" style="left:332px;top:672px;letter-spacing:0.3px">0.00</div>
<div class="ul" style="left:329px;top:687px;width:74px"></div>
<div class="a t" style="left:428px;top:672px;">本单实付金额：</div>
<div class="a t" style="left:519px;top:672px;letter-spacing:0.3px;color:#0000f0">0.00</div>
<div class="ul" style="left:516px;top:687px;width:74px"></div>
<div class="a t" style="left:615px;top:672px;">本单优惠金额：</div>
<div class="a t" style="left:706px;top:672px;letter-spacing:0.3px;color:#0000f0">0.00</div>
<div class="ul" style="left:703px;top:687px;width:74px"></div>
<div class="a t" style="left:802px;top:672px;">本单欠款金额：</div>
<div class="a t" style="left:893px;top:672px;letter-spacing:0.3px;color:#f00000">0.00</div>
<div class="ul" style="left:890px;top:687px;width:74px"></div>
<div class="a t" style="left:979px;top:672px;">发票号：</div>
<div class="ul" style="left:1032px;top:687px;width:166px"></div>
<div class="a t" style="left:241px;top:716px;">备注：</div>
<div class="ul" style="left:282px;top:731px;width:918px"></div>
<div class="a" style="left:255px;top:758px;width:13px;height:13px;border:1px solid #2a5f92;background:linear-gradient(135deg,#e2e2de,#fafafa)"></div>
<svg class="a" style="left:256px;top:759px" width="11" height="11"><path d="M2 5.2L4.5 8.2L9.3 2.6" stroke="#18a818" stroke-width="2.2" fill="none"/></svg>
<div class="a t" style="left:270px;top:757px;">保存后打印单据</div>
<div class="btn" style="left:799px;top:751px">导入<span class=m2>Excel</span></div>
<div class="btn" style="left:902px;top:751px">打开<span class=m2>(F4)</span></div>
<div class="btn" style="left:1006px;top:751px">保存<span class=m2>(F5)</span></div>
<div class="btn" style="left:1110px;top:751px">退出<span class=m2>(Esc)</span></div>
<div class="a" style="left:0;top:857px;width:1440px;height:19px;background:#eeeeee"></div>
<div class="a" style="left:1px;top:858px;width:123px;height:17px;border:1px solid #c9c9c9;border-radius:2px;background:#ededed"></div>
<div class="a" style="left:126px;top:858px;width:149px;height:17px;border:1px solid #c9c9c9;border-radius:2px;background:#ededed"></div>
<div class="a" style="left:277px;top:858px;width:303px;height:17px;border:1px solid #c9c9c9;border-radius:2px;background:#ededed"></div>
<div class="a" style="left:582px;top:858px;width:856px;height:17px;border:1px solid #c9c9c9;border-radius:2px;background:#ededed"></div>
<div class="a t" style="left:4px;top:860px;font-family:Liberation Mono,monospace;font-size:12px;letter-spacing:-1.2px;line-height:14px;height:14px;text-shadow:none">2014-06-11 14:14:39</div>
<div class="a t" style="left:129px;top:859px;line-height:14px;height:14px;font-size:12px"><span style="letter-spacing:0.6px">当前操作员：</span><span style="font-family:Liberation Mono,monospace;font-size:12px;letter-spacing:-1.2px">admin</span></div>
<div class="a t" style="left:280px;top:859px;line-height:14px;height:14px"><span style="letter-spacing:0.6px">当前账套：</span>演示数据库</div>
<div class="a t" style="left:501px;top:859px;color:#0000ee;text-decoration:underline;line-height:14px;height:14px">点击更换账套</div>
<div class="a t" style="left:585px;top:859px;line-height:14px;height:14px"><span style="font-family:Liberation Mono,monospace;font-size:12px;letter-spacing:-1.2px">F2-</span>客户管理<span style="font-family:Liberation Mono,monospace;font-size:12px;letter-spacing:-1.2px">&nbsp;F3-</span>库存状况<span style="font-family:Liberation Mono,monospace;font-size:12px;letter-spacing:-1.2px">&nbsp;F4-</span>营业报表<span style="font-family:Liberation Mono,monospace;font-size:12px;letter-spacing:-1.2px">&nbsp;F6-</span>提醒查询<span style="font-family:Liberation Mono,monospace;font-size:12px;letter-spacing:-1.2px">&nbsp;F7-</span>换班操作</div>
<div class="a" style="left:0;top:876px;width:1440px;height:8px;background:#fcfcfc"></div>
<div class="a" style="left:309px;top:876px;width:160px;height:8px;background:linear-gradient(#d4d4d4,#bcbcbc)"></div>
<div class="a" style="left:21px;top:880px;width:13px;height:4px;background:#e8e81a;border-radius:5px 5px 0 0"></div>
<div class="a" style="left:27px;top:877px;width:4px;height:7px;background:#7cc234;border-radius:2px 2px 0 0"></div>
<div class="a" style="left:62px;top:880px;width:15px;height:4px;background:#b48ad8;border-radius:1px 1px 0 0"></div>
<div class="a" style="left:69px;top:879px;width:6px;height:5px;background:#e0203a;border-radius:1px 1px 0 0"></div>
<div class="a" style="left:84px;top:879px;width:14px;height:5px;background:#2a8ee0;border-radius:3px 3px 0 0"></div>
<div class="a" style="left:108px;top:879px;width:14px;height:5px;background:#6cc04a;border-radius:6px 6px 0 0"></div>
<div class="a" style="left:134px;top:881px;width:11px;height:3px;background:#222;border-radius:1px 1px 0 0"></div>
<div class="a" style="left:159px;top:880px;width:15px;height:4px;background:#f0c85a;border-radius:3px 3px 0 0"></div>
<div class="a" style="left:179px;top:882px;width:5px;height:2px;background:#1a3a9a;border-radius:1px 1px 0 0"></div>
<div class="a" style="left:189px;top:881px;width:2px;height:3px;background:#3a8ae8;border-radius:1px 1px 0 0"></div>
<div class="a" style="left:193px;top:879px;font-size:12px;line-height:14px;color:#111">领智文档</div>
<div class="a" style="left:320px;top:880px;width:16px;height:4px;background:#3ab4f0;border-radius:1px 1px 0 0"></div>
<div class="a" style="left:340px;top:879px;font-size:12px;line-height:14px;color:#111">领智五业生产销售</div>
<div class="a" style="left:479px;top:880px;width:16px;height:4px;background:#2a5ad0;border-radius:1px 1px 0 0"></div>
<div class="a" style="left:499px;top:879px;font-size:12px;line-height:14px;color:#111">领智五业生产</div>
<div class="a" style="left:598px;top:881px;width:3px;height:3px;background:#6a6aaa;border-radius:1px 1px 0 0"></div>
<div class="a" style="left:640px;top:880px;width:14px;height:4px;background:#5ac040;border-radius:6px 6px 0 0"></div>
<div class="a" style="left:658px;top:879px;font-size:12px;line-height:14px;color:#111">微信网页版</div>
<div class="a" style="left:1224px;top:880px;width:13px;height:4px;background:#e04a1a;border-radius:0 0 0 0"></div>
<div class="a" style="left:1259px;top:880px;width:11px;height:4px;background:#9ac83a;border-radius:5px 5px 0 0"></div>
<div class="a" style="left:1275px;top:880px;width:16px;height:4px;background:#1a7ad0;border-radius:0 0 0 0"></div>
<div class="a" style="left:1295px;top:880px;width:12px;height:4px;background:#222;border-radius:6px 6px 0 0"></div>
<div class="a" style="left:1311px;top:880px;width:16px;height:4px;background:#e08a1a;border-radius:2px 2px 0 0"></div>
<div class="a" style="left:1331px;top:880px;width:13px;height:4px;background:#3a8ae0;border-radius:6px 6px 0 0"></div>
<div class="a" style="left:1348px;top:880px;width:13px;height:4px;background:#6aa0e0;border-radius:1px 1px 0 0"></div>
<div class="a" style="left:1365px;top:880px;width:15px;height:4px;background:#2a6ad0;border-radius:0 0 0 0"></div>
<div class="a" style="left:1383px;top:880px;width:14px;height:4px;background:#e04a1a;border-radius:0 0 0 0"></div>
</body></html>
